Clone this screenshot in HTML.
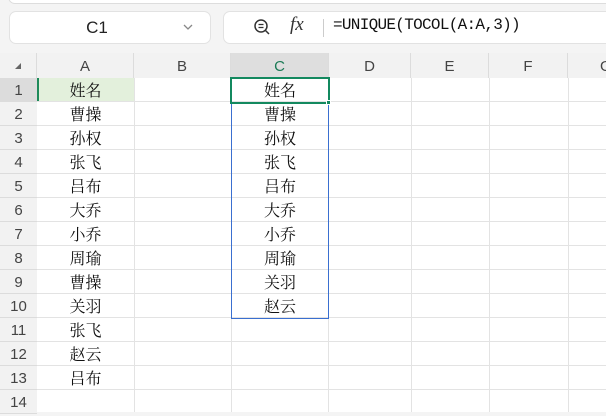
<!DOCTYPE html>
<html><head><meta charset="utf-8"><style>
*{margin:0;padding:0;box-sizing:border-box}
body{width:606px;height:412px;overflow:hidden;background:#f4f4f4;position:relative;font-family:"Liberation Sans","Noto Sans CJK SC",sans-serif}
.a{position:absolute}
.top{left:8px;top:-10px;width:620px;height:14px;background:#fff;border:1px solid #ddd;border-radius:8px}
.nb{left:9px;top:11px;width:202px;height:33px;background:#fff;border:1px solid #e2e2e2;border-radius:7px;font-size:17px;color:#222;text-align:center;line-height:31px}
.fb{left:223px;top:11px;width:400px;height:33px;background:#fff;border:1px solid #e2e2e2;border-radius:7px}
.grid{left:0;top:53px;width:606px;height:359px;background:#fff}
.ch{top:53px;height:25px;background:#f2f2f2;font-size:15px;color:#444;text-align:center;line-height:27px;border-right:1px solid #dcdcdc}
.rh{left:0;width:37px;height:24px;background:#f2f2f2;font-size:15px;color:#444;text-align:center;line-height:26px;border-bottom:1px solid #dcdcdc}
.hl{left:37px;width:569px;height:1px;background:#e3e3e3}
.vl{top:78px;width:1px;height:334px;background:#e3e3e3}
.c{height:24px;font-family:"Liberation Serif","Noto Serif CJK SC",serif;font-size:16px;color:#111;text-align:center;line-height:27px}
</style></head><body>
<div class="a top"></div>
<div class="a nb"><span style="margin-left:-26px">C1</span></div>
<svg class="a" style="left:182px;top:22px" width="12" height="10"><path d="M2 3 L6 7 L10 3" stroke="#888" stroke-width="1.3" fill="none"/></svg>
<div class="a fb"></div>
<svg class="a" style="left:252px;top:17px" width="20" height="20"><circle cx="9" cy="9" r="6" stroke="#333" stroke-width="1.5" fill="none"/><path d="M13.5 13.5 L17 17" stroke="#333" stroke-width="1.5"/><path d="M6.5 7.5h5M6.5 10.5h5" stroke="#333" stroke-width="1.2"/></svg>
<div class="a" style="left:290px;top:14px;font-family:'Liberation Serif',serif;font-style:italic;font-size:19px;color:#333">fx</div>
<div class="a" style="left:323px;top:19px;width:1px;height:18px;background:#ccc"></div>
<div class="a" style="left:333px;top:16px;font-family:'Liberation Mono',monospace;font-size:16px;color:#111;letter-spacing:-0.7px">=UNIQUE(TOCOL(A:A,3))</div>
<div class="a grid"></div>
<div class="a" style="left:0;top:53px;width:606px;height:25px;background:#f2f2f2;border-bottom:1px solid #dcdcdc"></div>
<div class="a ch" style="left:0;width:37px"><svg width="10" height="10" style="margin-top:8px"><path d="M8 2 L8 8 L2 8Z" fill="#666"/></svg></div>
<div class="a ch" style="left:37px;width:97px">A</div>
<div class="a ch" style="left:134px;width:97px">B</div>
<div class="a ch" style="left:231px;width:98px;background:#dedede;color:#1a7a55">C</div>
<div class="a ch" style="left:329px;width:82px">D</div>
<div class="a ch" style="left:411px;width:78px">E</div>
<div class="a ch" style="left:489px;width:79px">F</div>
<div class="a ch" style="left:568px;width:60px;text-align:left;padding-left:32px">G</div>
<div class="a" style="left:37px;top:78px;width:97px;height:24px;background:#e3f0dc"></div>
<div class="a" style="left:37px;top:78px;width:2px;height:24px;background:#1e8a5a"></div>
<div class="a vl" style="left:134px"></div>
<div class="a vl" style="left:231px"></div>
<div class="a vl" style="left:328px"></div>
<div class="a vl" style="left:411px"></div>
<div class="a vl" style="left:489px"></div>
<div class="a vl" style="left:568px"></div>
<div class="a" style="left:0;top:78px;width:37px;height:334px;background:#f2f2f2;border-right:1px solid #dcdcdc"></div>
<div class="a rh" style="top:78px;background:#dcdcdc">1</div>
<div class="a rh" style="top:102px">2</div>
<div class="a rh" style="top:126px">3</div>
<div class="a rh" style="top:150px">4</div>
<div class="a rh" style="top:174px">5</div>
<div class="a rh" style="top:198px">6</div>
<div class="a rh" style="top:222px">7</div>
<div class="a rh" style="top:246px">8</div>
<div class="a rh" style="top:270px">9</div>
<div class="a rh" style="top:294px">10</div>
<div class="a rh" style="top:318px">11</div>
<div class="a rh" style="top:342px">12</div>
<div class="a rh" style="top:366px">13</div>
<div class="a rh" style="top:390px">14</div>
<div class="a hl" style="top:101px"></div><div class="a hl" style="top:125px"></div><div class="a hl" style="top:149px"></div><div class="a hl" style="top:173px"></div><div class="a hl" style="top:197px"></div><div class="a hl" style="top:221px"></div><div class="a hl" style="top:245px"></div><div class="a hl" style="top:269px"></div><div class="a hl" style="top:293px"></div><div class="a hl" style="top:317px"></div><div class="a hl" style="top:341px"></div><div class="a hl" style="top:365px"></div><div class="a hl" style="top:389px"></div>
<div class="a" style="left:231px;top:102px;width:98px;height:217px;border:1px solid #3a6fd0;border-top:none"></div>
<div class="a" style="left:230px;top:77px;width:100px;height:27px;border:2px solid #13895f"></div>
<div class="a" style="left:326px;top:100px;width:5px;height:5px;background:#13895f;border:1px solid #fff"></div>
<div class="a" style="left:37px;top:78px;width:97px">
<div class="c">姓名</div><div class="c">曹操</div><div class="c">孙权</div><div class="c">张飞</div><div class="c">吕布</div><div class="c">大乔</div><div class="c">小乔</div><div class="c">周瑜</div><div class="c">曹操</div><div class="c">关羽</div><div class="c">张飞</div><div class="c">赵云</div><div class="c">吕布</div></div>
<div class="a" style="left:231px;top:78px;width:98px">
<div class="c">姓名</div><div class="c">曹操</div><div class="c">孙权</div><div class="c">张飞</div><div class="c">吕布</div><div class="c">大乔</div><div class="c">小乔</div><div class="c">周瑜</div><div class="c">关羽</div><div class="c">赵云</div></div>
</body></html>
